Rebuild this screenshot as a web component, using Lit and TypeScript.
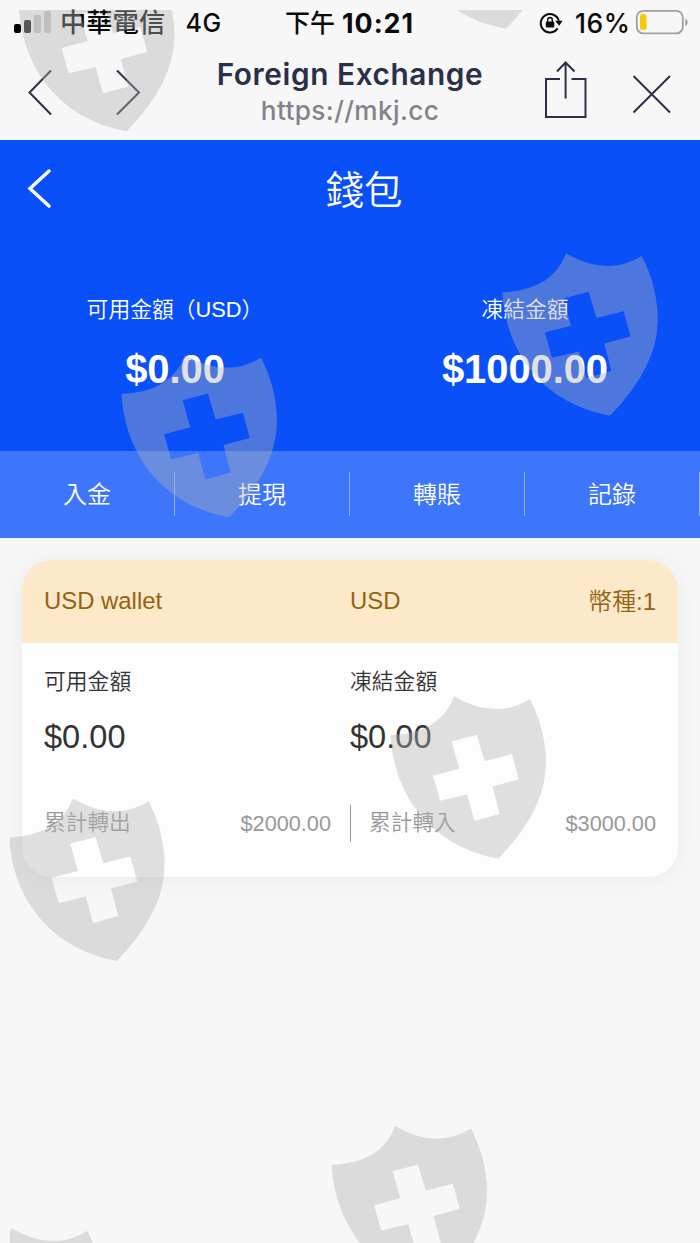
import { LitElement, html, css, svg } from "lit";
import { customElement } from "lit/decorators.js";

const SHIELD =
  "M2.3 42.3Q52.3 40.3 66 3.3Q107 27.5 141.7 6Q157.7 37 157.7 70Q157.7 117 110 165.7C45 154 6 105 2.3 42.3Z" +
  "M63.5 48.6L88.7 41.8L96.5 68L123.7 61.2L130.5 86.4L104.2 93.4L111.5 120.9L86.3 128L79 101.4L52 107.8L44.8 82.6L71 75.7Z";

const MARKS = [
  [16.7, -34.5],
  [396, -137],
  [500, 250],
  [119.2, 351.6],
  [388.2, 693],
  [6.8, 795.2],
  [329.3, 1122.6],
  [-54.4, 1225],
];

@customElement("status-bar")
class StatusBar extends LitElement {
  static styles = css`
    :host {
      display: grid;
      grid-template-columns: 285px 254px 1fr;
      height: 46px;
      font: 500 25px/46px Inter, "Noto Sans CJK TC", sans-serif;
      color: #0a0a0a;
      white-space: nowrap;
    }
    .group { display: flex; align-items: center; }
    .left { padding-left: 14px; }
    .signal { flex: none; width: 38px; height: 24px; }
    .carrier { margin-left: 8px; font-size: 26.3px; width: 125.5px; }
    .network { letter-spacing: 0.7px; }
    .clock { margin-left: 7px; font-size: 26.8px; font-weight: 700; letter-spacing: 1px; }
    .lock { flex: none; width: 24px; height: 24px; }
    .percent { margin-left: 12px; width: 60px; font-size: 26.4px; letter-spacing: 0.6px; }
    .battery { flex: none; width: 53px; height: 26px; margin-top: -2px; }
  `;
  render() {
    return html`
      <div class="group left">
        <svg class="signal" viewBox="0 0 38 24">
          <rect x="0" y="13" width="7" height="9" rx="2" fill="#000" />
          <rect x="10" y="9" width="7" height="13" rx="2" fill="#1b1b1b" />
          <rect x="20" y="4" width="7" height="18" rx="2" fill="#c9c9c9" />
          <rect x="30" y="0" width="7" height="22" rx="2" fill="#c9c9c9" />
        </svg>
        <span class="carrier">中華電信</span><span class="network">4G</span>
      </div>
      <div class="group"><span>下午</span><span class="clock">10:21</span></div>
      <div class="group">
        <svg class="lock" viewBox="0 0 24 24" fill="none" stroke="#0a0a0a" stroke-width="2">
          <path d="M18.6 17.4A9.2 9.2 0 1 1 19.8 9.8" />
          <path d="M16.2 9.8h7.4l-3.4 5z" fill="#0a0a0a" stroke="none" />
          <rect x="6.8" y="10.4" width="8.4" height="6.2" rx="1" fill="#0a0a0a" stroke="none" />
          <path d="M8.7 10.8V8.8a2.3 2.3 0 0 1 4.6 0V11" stroke-width="1.4" />
        </svg>
        <span class="percent">16%</span>
        <svg class="battery" viewBox="0 0 53 26">
          <rect x="1.8" y="1.8" width="46" height="22.6" rx="6.5" fill="none" stroke="#a0a0a0" stroke-width="1.8" />
          <rect x="5" y="5" width="6.5" height="16" rx="2.5" fill="#f7c90a" />
          <path d="M50.3 9.5q2.4 1 2.4 3.8t-2.4 3.8z" fill="#a0a0a0" />
        </svg>
      </div>
    `;
  }
}

@customElement("browser-bar")
class BrowserBar extends LitElement {
  static styles = css`
    :host {
      display: grid;
      grid-template-columns: 200px 300px 200px;
      height: 93.5px;
      font-family: Inter, sans-serif;
      text-align: center;
      white-space: nowrap;
    }
    svg { display: block; width: 200px; height: 93.5px; fill: none; stroke: #2b3049; stroke-width: 2; }
    .title { font-size: 29.8px; line-height: 36px; font-weight: 600; color: #2b3049; padding-top: 10px; letter-spacing: 0.58px; }
    .url { font-size: 26.2px; line-height: 36px; font-weight: 500; color: #83838b; padding-top: 1px; letter-spacing: 0.38px; }
  `;
  render() {
    return html`
      <svg viewBox="0 0 200 93.5"><path d="M51 24.5L29.5 46.5L51 68.5M117 24.5L139 46.5L117 68.5" /></svg>
      <div>
        <div class="title">Foreign Exchange</div>
        <div class="url">https://mkj.cc</div>
      </div>
      <svg viewBox="0 0 200 93.5">
        <path d="M60 33H46V71H85.5V33H71.5M65.6 52.5V17M57 25.5L65.6 16.5L74.5 25.5M133.5 30L170 66.5M170 30L133.5 66.5" />
      </svg>
    `;
  }
}

@customElement("wallet-summary")
class WalletSummary extends LitElement {
  static styles = css`
    :host {
      display: block;
      height: 398.5px;
      background: #0a50f8;
      color: #fff;
      font-family: "Liberation Sans", "Noto Sans CJK TC", sans-serif;
      text-align: center;
      white-space: nowrap;
    }
    .head { display: grid; grid-template-columns: 64px 1fr 36px; height: 98.5px; line-height: 102px; font-size: 38.5px; font-weight: 350; }
    .back { width: 64px; height: 98px; }
    .sums { display: grid; grid-template-columns: 1fr 1fr; height: 212.5px; }
    .label { margin-top: 54px; font-size: 21.8px; line-height: 36px; font-weight: 350; }
    .sum { margin-top: 18px; font-size: 40px; line-height: 46px; font-weight: 700; letter-spacing: -0.1px; }
    .tabs { display: grid; grid-template-columns: repeat(4, 1fr); align-items: center; height: 87.5px; background: #3d75fb; font-size: 24px; font-weight: 350; }
    .tab { height: 44px; line-height: 46px; border-right: 1px solid #8fb0fc; }
  `;
  render() {
    return html`
      <div class="head">
        <svg class="back" viewBox="0 0 64 98"><path d="M49 31L30 48.5L49 66" fill="none" stroke="#fff" stroke-width="3.4" stroke-linecap="round" /></svg>
        <span>錢包</span>
      </div>
      <div class="sums">
        <div><div class="label">可用金額（USD）</div><div class="sum">$0.00</div></div>
        <div><div class="label">凍結金額</div><div class="sum">$1000.00</div></div>
      </div>
      <div class="tabs">
        ${["入金", "提現", "轉賬", "記錄"].map((t) => html`<div class="tab">${t}</div>`)}
      </div>
    `;
  }
}

@customElement("wallet-card")
class WalletCard extends LitElement {
  static styles = css`
    :host {
      display: block;
      margin: 22px 22px 0;
      height: 317px;
      border-radius: 30px;
      overflow: hidden;
      background: #fdfdfd;
      box-shadow: 0 2px 22px rgba(0, 0, 0, 0.055);
      color: #333;
      font-family: "Liberation Sans", "Noto Sans CJK TC", sans-serif;
      white-space: nowrap;
    }
    .head { display: grid; grid-template-columns: 306px 1fr auto; padding: 0 22px; height: 83px; line-height: 82px; background: #fce9ca; color: #956310; font-size: 23.9px; }
    .kind { line-height: 84px; font-weight: 350; }
    .balances { display: grid; grid-template-columns: 306px 1fr; padding: 21px 22px 0; height: 142px; box-sizing: border-box; }
    .label { font-size: 21.8px; line-height: 36px; font-weight: 350; }
    .amount { margin-top: 16px; font-size: 32.6px; line-height: 42px; }
    .totals { display: grid; grid-template-columns: 287px 1px 287px; justify-content: space-between; padding: 0 22px; height: 76px; align-items: center; color: #999; font-size: 21.7px; }
    .total { display: flex; justify-content: space-between; align-items: center; line-height: 34px; }
    .rule { height: 37px; background: #999; }
    .name { font-weight: 350; }
    .value { padding-top: 1px; }
  `;
  render() {
    return html`
      <div class="head"><span>USD wallet</span><span>USD</span><span class="kind">幣種:1</span></div>
      <div class="balances">
        <div><div class="label">可用金額</div><div class="amount">$0.00</div></div>
        <div><div class="label">凍結金額</div><div class="amount">$0.00</div></div>
      </div>
      <div class="totals">
        <div class="total"><span class="name">累計轉出</span><span class="value">$2000.00</span></div>
        <div class="rule"></div>
        <div class="total"><span class="name">累計轉入</span><span class="value">$3000.00</span></div>
      </div>
    `;
  }
}

@customElement("app-root")
class AppRoot extends LitElement {
  static styles = css`
    :host { display: block; position: relative; width: 700px; height: 1243px; overflow: hidden; background: #f7f7f7; }
    .marks { position: absolute; top: 0; left: 0; width: 700px; height: 1243px; pointer-events: none; }
  `;
  render() {
    return html`
      <status-bar></status-bar>
      <browser-bar></browser-bar>
      <wallet-summary></wallet-summary>
      <wallet-card></wallet-card>
      <svg class="marks" viewBox="0 0 700 1243">
        <clipPath id="area"><rect x="10" y="10" width="690" height="1233" /></clipPath>
        <g clip-path="url(#area)" fill="#b1b1b1" fill-opacity="0.4" fill-rule="evenodd">
          ${MARKS.map(([x, y]) => svg`<path transform="translate(${x} ${y})" d=${SHIELD} />`)}
        </g>
      </svg>
    `;
  }
}
